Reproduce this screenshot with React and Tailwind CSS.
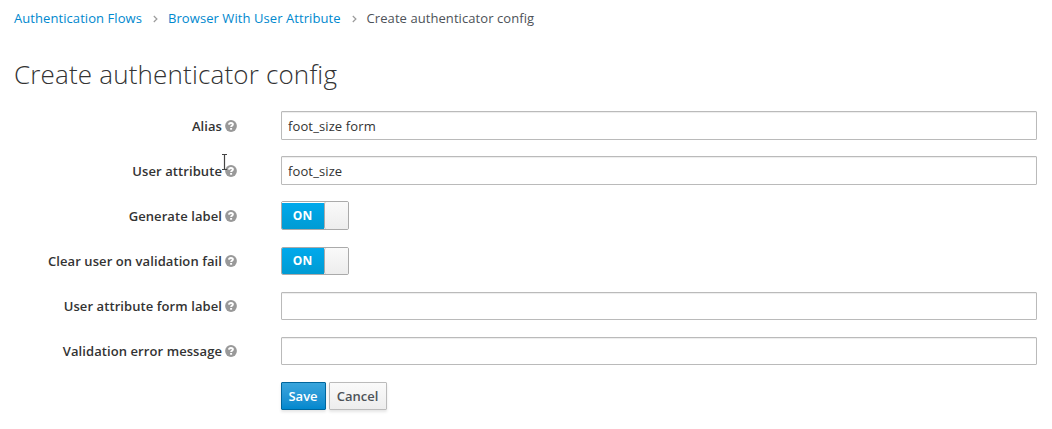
const Help = () => (
  <svg className="ml-[3px] mt-px h-3 w-3 shrink-0" viewBox="0 0 12 12">
    <circle cx="6" cy="6" r="5.9" fill="#999" />
    <path d="M3.9 4.7C4.1 2.5 8 2.5 7.9 4.5C7.8 5.7 6.1 5.7 6.1 7.1" fill="none" stroke="#fff" strokeWidth="1.9" />
    <rect x="5.1" y="8" width="2" height="1.7" fill="#fff" />
  </svg>
);

const Chevron = () => (
  <svg className="ml-[11px] mr-[10px] mt-px h-2 w-[5px]" viewBox="0 0 5 8">
    <path d="M.8 1L3.9 4L.8 7" fill="none" stroke="#9c9c9c" strokeWidth="1.2" />
  </svg>
);

const Row = ({ label, compact = false, children }) => (
  <div className="flex h-[29px] items-center">
    <label className="flex w-[223px] items-center justify-end whitespace-nowrap font-semibold tracking-[0.08px]">
      {label}
      <Help />
    </label>
    <div className={compact ? "ml-11 h-[28px] flex-1 self-end" : "ml-11 h-[29px] flex-1"}>{children}</div>
  </div>
);

const Input = ({ value = "" }) => (
  <input
    readOnly
    value={value}
    className="block h-full w-full rounded-[1px] border border-[#bababa] bg-white px-[6px] tracking-[0.12px] shadow-[inset_0_1px_1px_rgba(3,3,3,0.075)] outline-none"
  />
);

const Toggle = ({ inset = false }) => (
  <div className="flex h-full w-[68px] overflow-hidden rounded-[2px] border border-[#aaa]">
    <div
      className={
        (inset ? "border-t border-white pb-px " : "") +
        "flex w-[42px] items-center justify-center bg-linear-to-b from-[#00a9ec] to-[#009bd3] pr-px text-[12px] leading-[18px] font-bold text-white"
      }
    >
      ON
    </div>
    <div className="flex-1 rounded-l-[2px] border-l border-[#aaa] bg-linear-to-b from-[#fafafa] to-[#ededed]" />
  </div>
);

export default function App() {
  return (
    <main className="relative h-[429px] w-[1052px] overflow-hidden bg-white pl-[14px] pr-[15px] font-['Open_Sans',sans-serif] text-[13px] leading-[20px] text-[#333]">
      <nav className="flex items-center pt-2 tracking-[0.07px]">
        <a className="text-[#0088ce]">Authentication Flows</a>
        <Chevron />
        <a className="text-[#0088ce]">Browser With User Attribute</a>
        <Chevron />
        <span className="text-[#4d5258]">Create authenticator config</span>
      </nav>
      <h1 className="mt-[30px] text-[26px] font-light leading-[32px] tracking-[0.17px]">Create authenticator config</h1>
      <form className="mt-[21px] flex flex-col gap-4">
        <Row label="Alias"><Input value="foot_size form" /></Row>
        <Row label="User attribute"><Input value="foot_size" /></Row>
        <Row label="Generate label"><Toggle inset /></Row>
        <Row label="Clear user on validation fail" compact><Toggle /></Row>
        <Row label="User attribute form label" compact><Input /></Row>
        <Row label="Validation error message" compact><Input /></Row>
        <div className="ml-[267px] mt-px flex gap-[3px]">
          <button type="button" className="h-[28px] w-[45px] rounded-[1px] border border-[#00659c] bg-linear-to-b from-[#39a5dc] to-[#0088ce] pr-px font-semibold text-white shadow-[0_2px_3px_rgba(3,3,3,0.1)]">Save</button>
          <button type="button" className="h-[28px] w-[58px] rounded-[1px] border border-[#bbb] bg-linear-to-b from-[#fafafa] to-[#ededed] pr-px font-semibold text-[#4d5258] shadow-[0_2px_3px_rgba(3,3,3,0.1)]">Cancel</button>
        </div>
      </form>
      <svg className="absolute left-[220px] top-[154px] h-4 w-[9px]" viewBox="0 0 9 16">
        <path d="M2 .5H7M4.5 1V15M2 15.5H7" fill="none" stroke="#444" strokeWidth="1.2" />
      </svg>
    </main>
  );
}
